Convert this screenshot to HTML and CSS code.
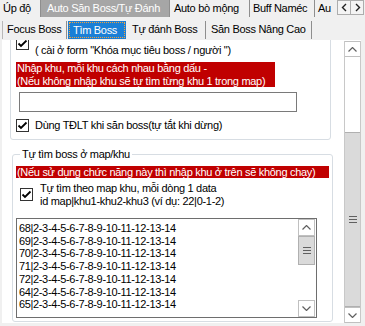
FILE: index.html
```html
<!DOCTYPE html>
<html lang="vi">
<head>
<meta charset="utf-8">
<title>Tìm Boss</title>
<link rel="stylesheet" href="styles.css">
</head>
<body>
<div class="tabs1">
  <div class="tab1 w-up">Úp độ</div>
  <div class="tab1 tab1-sel w-auto">Auto Săn Boss/Tự Đánh</div>
  <div class="tab1 w-bo">Auto bò mộng</div>
  <div class="tab1 w-buff">Buff Naméc</div>
  <div class="tab1 tab1-cut">Au</div>
  <div class="tabnav">
    <div class="navbtn"><svg width="7" height="9" viewBox="0 0 7 9"><polyline points="5,1 1.5,4.5 5,8" /></svg></div>
    <div class="navbtn"><svg width="7" height="9" viewBox="0 0 7 9"><polyline points="2,1 5.5,4.5 2,8" /></svg></div>
  </div>
</div>
<div class="tabs2">
  <div class="tab2 w-focus">Focus Boss</div>
  <div class="tab2 tab2-sel w-tim"><span class="focusbox">Tìm Boss</span></div>
  <div class="tab2 w-tu">Tự đánh Boss</div>
  <div class="tab2 w-san">Săn Boss Nâng Cao</div>
</div>
<div class="panel">
  <div class="viewport">
    <div class="content">
      <fieldset class="group g1">
        <div class="chk chk-top">
          <span class="box"><svg width="11" height="11" viewBox="0 0 11 11"><polyline points="1.5,5.5 4,8 9.5,2.5" /></svg></span>
          <span class="lbl">&nbsp;<br>( cài ở form "Khóa mục tiêu boss / người ")</span>
        </div>
        <div class="red red1">Nhập khu, mỗi khu cách nhau bằng dấu -<br>(Nếu không nhập khu sẽ tự tìm từng khu 1 trong map)</div>
        <div class="input"></div>
        <div class="chk chk-tdlt">
          <span class="box"><svg width="11" height="11" viewBox="0 0 11 11"><polyline points="1.5,5.5 4,8 9.5,2.5" /></svg></span>
          <span class="lbl">Dùng TĐLT khi săn boss(tự tắt khi dừng)</span>
        </div>
      </fieldset>
      <fieldset class="group g2">
        <legend class="legend">Tự tìm boss ở map/khu</legend>
        <div class="red red2">(Nếu sử dụng chức năng này thì nhập khu ở trên sẽ không chạy)</div>
        <div class="chk chk-map">
          <span class="box"><svg width="11" height="11" viewBox="0 0 11 11"><polyline points="1.5,5.5 4,8 9.5,2.5" /></svg></span>
          <span class="lbl">Tự tìm theo map khu, mỗi dòng 1 data<br>id map|khu1-khu2-khu3 (ví dụ: 22|0-1-2)</span>
        </div>
        <div class="textarea">
          <div class="lines">
            <div>68|2-3-4-5-6-7-8-9-10-11-12-13-14</div>
            <div>69|2-3-4-5-6-7-8-9-10-11-12-13-14</div>
            <div>70|2-3-4-5-6-7-8-9-10-11-12-13-14</div>
            <div>71|2-3-4-5-6-7-8-9-10-11-12-13-14</div>
            <div>72|2-3-4-5-6-7-8-9-10-11-12-13-14</div>
            <div>64|2-3-4-5-6-7-8-9-10-11-12-13-14</div>
            <div>65|2-3-4-5-6-7-8-9-10-11-12-13-14</div>
          </div>
          <div class="vscroll vs-inner">
            <div class="sbtn"><svg width="9" height="5" viewBox="0 0 9 5"><polyline points="0.5,4.5 4.5,0.5 8.5,4.5" /></svg></div>
            <div class="thumb thumb-inner"><span class="grip"></span></div>
            <div class="track"></div>
            <div class="sbtn"><svg width="9" height="5" viewBox="0 0 9 5"><polyline points="0.5,0.5 4.5,4.5 8.5,0.5" /></svg></div>
          </div>
        </div>
      </fieldset>
    </div>
  </div>
  <div class="vscroll vs-main">
    <div class="sbtn"><svg width="9" height="5" viewBox="0 0 9 5"><polyline points="0.5,4.5 4.5,0.5 8.5,4.5" /></svg></div>
    <div class="track track-main"></div>
    <div class="thumb thumb-main"><span class="grip"></span></div>
    <div class="sbtn"><svg width="9" height="5" viewBox="0 0 9 5"><polyline points="0.5,0.5 4.5,4.5 8.5,0.5" /></svg></div>
  </div>
</div>
</body>
</html>
```

FILE: styles.css
```css
* { box-sizing: border-box; }
html, body { margin: 0; padding: 0; }
body {
  width: 365px;
  height: 326px;
  overflow: hidden;
  background: #f0f0f0;
  font-family: "Liberation Sans", Arial, sans-serif;
  font-size: 11px;
  letter-spacing: -0.3px;
  color: #000;
}

/* top tab strip */
.tabs1 {
  display: flex;
  height: 20px;
  align-items: flex-start;
  white-space: nowrap;
}
.tab1 {
  height: 17px;
  line-height: 16px;
  padding-left: 4px;
  border-right: 1px solid #8e8e8e;
  overflow: hidden;
}
.w-up { width: 41px; padding-left: 3px; }
.w-auto { width: 129px; }
.w-bo { width: 80px; padding-left: 4px; }
.w-buff { width: 65px; padding-left: 3px; }
.tab1-sel {
  background: #a6a6a6;
  color: #fff;
  border-right: 1px solid #8e8e8e;
  padding-left: 6px;
}
.tab1-cut { width: 22px; border-right: none; padding-left: 3px; }
.tabnav { display: flex; }
.navbtn {
  width: 14px;
  height: 15px;
  border: 1px solid #adadad;
  background: #f4f4f4;
  display: flex;
  align-items: center;
  justify-content: center;
  margin-left: -1px;
}
.navbtn:first-child { margin-left: 0; }
.navbtn svg polyline { fill: none; stroke: #222; stroke-width: 1.4; }

/* second tab strip */
.tabs2 {
  display: flex;
  height: 20px;
  padding-top: 1px;
  padding-left: 2px;
  white-space: nowrap;
}
.tab2 {
  height: 18px;
  line-height: 17px;
  padding-left: 4px;
  border-right: 1px solid #8e8e8e;
}
.w-focus { width: 65px; border-left: 1px solid #b8b8b8; }
.w-tim { width: 58px; padding: 1px; }
.w-tu { width: 78px; padding-left: 4px; }
.w-san { width: 106px; padding-left: 5px; }
.tab2-sel {
  background: #1a7fd6;
  color: #fff;
  border-right: none;
  margin-left: 1px;
  margin-right: 2px;
}
.focusbox {
  display: block;
  height: 16px;
  line-height: 14px;
  padding-left: 3px;
  border: 1px dotted #f4a23a;
}

/* main panel */
.panel {
  display: flex;
  margin-left: 2px;
  width: 359px;
  height: 283px;
  background: #fff;
}
.viewport {
  flex: 1;
  overflow: hidden;
}
.content { margin-top: -20px; }

.group {
  margin: 0;
  border: 1px solid #d7dde3;
  border-radius: 3px;
  min-width: 0;
}
.g1 {
  margin-left: 8px;
  width: 321px;
  padding: 10px 0 7px 5px;
}
.g2 {
  margin-left: 10px;
  margin-top: 8px;
  width: 321px;
  padding: 0 0 3px 3px;
}
.legend {
  padding: 0 2px;
  margin-left: 4px;
  line-height: 12px;
  height: 12px;
}

.chk {
  display: flex;
  align-items: center;
}
.box {
  width: 13px;
  height: 13px;
  flex: none;
  border: 1px solid #333;
  background: #fff;
  display: flex;
  align-items: center;
  justify-content: center;
}
.box svg polyline { fill: none; stroke: #000; stroke-width: 1.8; }
.lbl { line-height: 12.5px; white-space: nowrap; }
.chk-top .lbl { margin-left: 6px; }
.chk-tdlt { margin-top: 7px; }
.chk-tdlt .lbl { margin-left: 6px; }

.red {
  background: #c00000;
  color: #fff;
  padding-left: 1px;
  white-space: nowrap;
}
.red1 {
  margin-top: 6px;
  width: 259px;
  line-height: 12.5px;
}
.input {
  margin-top: 5px;
  margin-left: 3px;
  width: 278px;
  height: 20px;
  border: 1px solid #7a7a7a;
  background: #fff;
}

.red2 {
  margin-top: 6px;
  width: 313px;
  line-height: 12px;
  height: 12px;
}
.chk-map { margin-top: 4px; margin-left: 4px; }
.chk-map .lbl { margin-left: 7px; }

.textarea {
  margin-top: 11px;
  width: 301px;
  height: 100px;
  border: 1px solid #6e6e6e;
  display: flex;
  background: #fff;
}
.lines {
  flex: 1;
  padding: 3px 0 0 2px;
  line-height: 12.7px;
  letter-spacing: -0.35px;
  white-space: nowrap;
}

/* scrollbars */
.vscroll {
  width: 17px;
  display: flex;
  flex-direction: column;
  background: #fff;
}
.vs-inner { height: 98px; margin-right: 1px; }
.vs-main { margin-top: 1px; height: 282px; border-left: 1px solid #c8c8c8; border-right: 1px solid #c8c8c8; }
.sbtn {
  height: 17px;
  flex: none;
  border: 1px solid #c0c0c0;
  background: #fff;
  display: flex;
  align-items: center;
  justify-content: center;
}
.vs-main .sbtn { height: 16px; border-left: none; border-right: none; }
.sbtn svg polyline { fill: none; stroke: #606060; stroke-width: 1.2; }
.thumb {
  flex: none;
  background: #dadada;
  border: 1px solid #b0b0b0;
  display: flex;
  align-items: center;
  justify-content: center;
}
.vs-main .thumb { border-left: none; border-right: none; }
.thumb-inner { height: 29px; }
.thumb-main { height: 175px; }
.track { flex: 1; background: #fff; }
.grip {
  width: 8px;
  height: 7px;
  border-top: 1px solid #606060;
  border-bottom: 1px solid #606060;
  background: linear-gradient(#606060, #606060) center / 8px 1px no-repeat;
}
```
